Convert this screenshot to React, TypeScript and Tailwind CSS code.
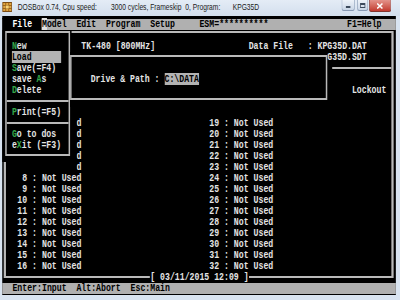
import type { ReactNode } from 'react'

type Part = [number, string]

// place strings at fixed text-mode columns
function line(parts: Part[]) {
  let s = ''
  for (const [col, text] of parts) s = s.padEnd(col) + text
  return s
}

const ROW = 'h-[11.04px]'
const LINE = 'border-[#b9b9b9]'

function Key({ children }: { children: ReactNode }) {
  return <span className="text-[#35a84a]">{children}</span>
}

function DosboxIcon() {
  return (
    <svg width="13.4" height="10" viewBox="0 0 10 10" preserveAspectRatio="none" className="ml-[2.7px] mt-[2px] shrink-0">
      <rect x="0.5" y="0.5" width="9" height="9" fill="#e2a640" stroke="#7c4c14" />
      <path d="M0.5 3.5H9.5M0.5 6.5H9.5M3.5 0.5V9.5M6.5 0.5V9.5" stroke="#8a5716" strokeWidth="0.8" />
      <rect x="3.5" y="3.5" width="3" height="3" fill="#f6d47a" />
    </svg>
  )
}

function TitleBar() {
  return (
    <div className="h-[16px] flex items-start bg-gradient-to-b from-[#e4ecf6] to-[#d3dfed]">
      <DosboxIcon />
      <div className="ml-[7.7px] mt-[2px] flex font-['Liberation_Sans',Arial,sans-serif] text-[9px] leading-[11px] text-[#1b1b1b] whitespace-pre">
        <span className="w-[125.2px]">DOSBox 0.74, Cpu speed:</span>
        <span className="w-[163.2px]">3000 cycles, Frameskip  0, Program:</span>
        <span>KPG35D</span>
      </div>
      <div className="ml-auto mr-[12.1px] flex items-start">
        <div className="w-[17.8px] h-[11px] flex items-end justify-center pb-[2.5px] border border-t-0 border-[#8799b3] rounded-b-[3px] bg-gradient-to-b from-[#eef3f9] to-[#c9d6e6]">
          <div className="w-[6px] h-[2px] bg-[#3c4a5c]" />
        </div>
        <div className="ml-[2.3px] w-[15.5px] h-[11px] flex items-center justify-center border border-t-0 border-[#8799b3] rounded-b-[3px] bg-gradient-to-b from-[#eef3f9] to-[#c9d6e6]">
          <div className="w-[7px] h-[5px] border border-t-2 border-[#3c4a5c]" />
        </div>
        <div className="ml-[1px] w-[29.5px] h-[12px] flex items-center justify-center border border-t-0 border-[#83352f] rounded-b-[3px] bg-gradient-to-b from-[#e3928a] to-[#c2392f]">
          <svg width="9" height="6" viewBox="0 0 9 6" preserveAspectRatio="none">
            <path d="M1 0.5L8 5.5M8 0.5L1 5.5" stroke="#fff" strokeWidth="1.6" />
          </svg>
        </div>
      </div>
    </div>
  )
}

function MenuItem({ children }: { children: ReactNode }) {
  return <div className={`${ROW} pl-[7.3px]`}>{children}</div>
}

function Separator() {
  return (
    <div className={`${ROW} flex items-center`}>
      <div className="w-full h-[2px] bg-[#b9b9b9]" />
    </div>
  )
}

function FileMenu() {
  return (
    <div className="absolute left-0 top-[13.54px] w-[92.4px] h-[132.48px] bg-black shadow-[6.6px_11.04px_0_0_#000]">
      <div className={`mt-[1.96px] ml-[3.2px] mr-[2px] h-[125px] border-y-2 border-x-[2.7px] ${LINE} pt-[7.08px]`}>
        <MenuItem>
          <Key>N</Key>ew
        </MenuItem>
        <MenuItem>
          <span className="bg-[#b3b3b3] text-black">{'Load      '}</span>
        </MenuItem>
        <MenuItem>
          <Key>S</Key>ave(=F4)
        </MenuItem>
        <MenuItem>
          save <Key>A</Key>s
        </MenuItem>
        <MenuItem>
          <Key>D</Key>elete
        </MenuItem>
        <Separator />
        <MenuItem>
          <Key>P</Key>rint(=F5)
        </MenuItem>
        <Separator />
        <MenuItem>
          <Key>G</Key>o to dos
        </MenuItem>
        <MenuItem>
          e<Key>X</Key>it (=F3)
        </MenuItem>
      </div>
    </div>
  )
}

function PathDialog() {
  return (
    <div className="absolute left-[91px] top-[35.62px] w-[344.2px] h-[55.2px] bg-black shadow-[6.6px_11.04px_0_0_#000]">
      <div className={`mt-[3.38px] h-[45px] border-y-2 border-x-[2.7px] ${LINE} pt-[16.7px] pl-[25.1px]`}>
        <div className={ROW}>
          {'Drive & Path : '}
          <span className="bg-[#b3b3b3] text-black">{'C:\\DATA'}</span>
        </div>
      </div>
    </div>
  )
}

// channels 1-16 on the left, 17-32 on the right; the top ones sit under the menu and dialog
const channels = Array.from({ length: 16 }, (_, i) => i + 1)

function ChannelRow({ n }: { n: number }) {
  return (
    <div className={`${ROW} -ml-[5px] flex`}>
      <span className="w-[105.6px] shrink-0">
        {n >= 8 ? String(n).padStart(5) + ' : Not Used' : n >= 3 ? <span className="pl-[99px]">d</span> : null}
      </span>
      {n + 16 >= 19 && <span>{String(n + 16).padStart(28) + ' : Not Used'}</span>}
    </div>
  )
}

function Screen() {
  return (
    <div className="relative ml-[3.49px] w-[528px] h-[278.5px] bg-black pt-[2.5px] font-['Liberation_Mono','DejaVu_Sans_Mono',monospace] font-bold text-[11px] leading-[11.04px] whitespace-pre text-[#e4e4e4]">
      <div className={`${ROW} bg-[#b0b0b0] text-black`}>
        <span className="bg-black text-white">{'  File  '}</span>
        <span className="bg-[#e2e2e2]">M</span>
        {line([[0, 'odel'], [6, 'Edit'], [12, 'Program'], [21, 'Setup'], [31, 'ESM=**********'], [61, 'F1=Help']])}
      </div>

      <div className={`mt-[1.96px] ml-[2px] mr-[3.5px] border-y-2 border-x-[3px] ${LINE} pt-[7.08px] pb-[3.58px]`}>
        <div className={`${ROW} -ml-[5px] pl-[105.6px]`}>
          {line([[0, 'TK-480 [800MHz]'], [34, 'Data File'], [46, ': KPG35D.DAT']])}
        </div>
        <div className={`${ROW} -ml-[5px] pl-[422.4px]`}>KPG35D.SDT</div>
        <Separator />
        <div className={ROW} />
        <div className={`${ROW} -ml-[5px] pl-[468.6px]`}>Lockout</div>
        {channels.map((n) => (
          <ChannelRow key={n} n={n} />
        ))}
      </div>

      <div className={`mt-[5.46px] ${ROW} bg-[#b0b0b0] text-black`}>
        {line([[2, 'Enter:Input'], [15, 'Alt:Abort'], [26, 'Esc:Main']])}
      </div>

      <div className={`absolute left-[198px] top-[256.42px] ${ROW} bg-black`}>[ 03/11/2015 12:09 ]</div>
      <FileMenu />
      <PathDialog />
    </div>
  )
}

export default function App() {
  return (
    <div className="w-[400px] h-[300px] overflow-hidden bg-[#d9e4f1]">
      <div className="w-[536.6px] h-[300px] origin-top-left scale-x-[0.7455]">
        <TitleBar />
        <Screen />
      </div>
    </div>
  )
}
